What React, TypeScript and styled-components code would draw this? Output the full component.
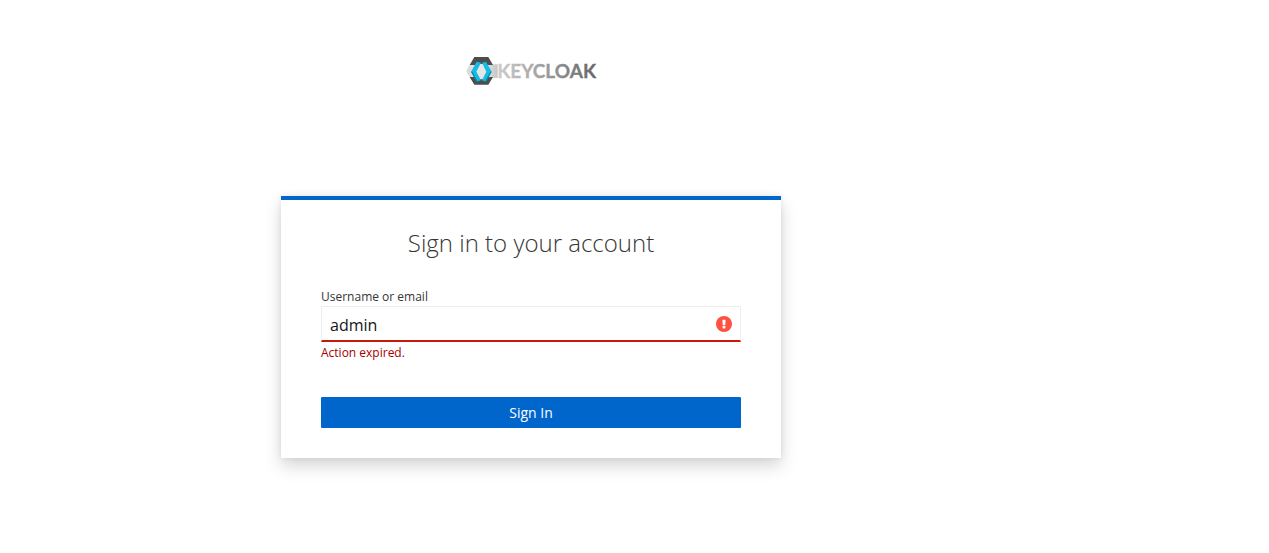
import React, { useState } from "react";
import styled, { createGlobalStyle } from "styled-components";

const GlobalStyle = createGlobalStyle`
  *, *::before, *::after { box-sizing: border-box; }
  body {
    margin: 0;
    background: #fff;
    color: #363636;
    font-family: "Open Sans", "Noto Sans", sans-serif;
    font-size: 12px;
    line-height: 18px;
  }
`;

const Page = styled.div`
  display: flex;
  flex-direction: column;
  align-items: center;
  padding: 56px 207px 80px 0;
`;

const Header = styled.header`
  margin-bottom: 110px;
`;

const LogoSvg = styled.svg`
  display: block;
  width: 132px;
  height: 30px;
`;

const Card = styled.main`
  width: 100%;
  max-width: 500px;
  padding: 27px 40px 30px;
  background: #fff;
  border-top: 4px solid #0066cc;
  box-shadow: 0 8px 16px 0 rgba(3, 3, 3, 0.16), 0 0 6px 0 rgba(3, 3, 3, 0.08);
`;

const Title = styled.h1`
  margin: 0 0 30px;
  font-size: 24px;
  font-weight: 300;
  line-height: 31px;
  text-align: center;
`;

const Label = styled.label`
  display: block;
`;

const Field = styled.div`
  position: relative;
`;

const TextInput = styled.input`
  display: block;
  width: 100%;
  height: 36px;
  padding: 2px 32px 0 8px;
  border: 1px solid #ededed;
  border-bottom: 2px solid #c9190b;
  border-radius: 0;
  background: #fff;
  color: #151515;
  font-family: inherit;
  font-size: 16px;
  outline: none;
`;

const ErrorIcon = styled.svg`
  position: absolute;
  top: 10px;
  right: 9px;
  width: 16px;
  height: 16px;
  pointer-events: none;
`;

const ErrorText = styled.p`
  margin: 2px 0 35px;
  color: #a30000;
`;

const SubmitButton = styled.button`
  display: block;
  width: 100%;
  height: 31px;
  padding: 0;
  border: 0;
  border-radius: 1px;
  background: #0066cc;
  color: #fff;
  font-family: inherit;
  font-size: 14px;
  line-height: 31px;
  cursor: pointer;
`;

function Logo() {
  return (
    <LogoSvg viewBox="15 18 396 90" role="img" aria-label="Keycloak">
      <defs>
        <linearGradient id="band" x1="0" x2="1" y1="0" y2="0">
          <stop offset="0" stopColor="#d8d8d8" />
          <stop offset="0.5" stopColor="#ececec" />
          <stop offset="1" stopColor="#c6c6c6" />
        </linearGradient>
        <linearGradient id="word" x1="0" x2="1" y1="0" y2="0">
          <stop offset="0" stopColor="#cdcdcd" />
          <stop offset="1" stopColor="#666" />
        </linearGradient>
      </defs>
      <path d="M30 43H113V84H30L19 63Z" fill="url(#band)" />
      <path d="M43 21H85L99 45H29ZM29 81H99L85 104H43Z" fill="#4d4d4d" />
      <path d="M52 36H76L92 66L76 94H52L36 66Z" fill="#4d4d4d" />
      <path d="M58 42H71L83 65L71 88H58L46 65Z" fill="#e5e5e5" />
      <path d="M50 35L63 38L49 65L63 91L50 95L33 65Z" fill="#12bce6" />
      <path d="M33 65H37L53 94L50 95Z" fill="#008aaa" />
      <path d="M78 35L66 38L79 65L66 91L78 95L95 65Z" fill="#12bce6" />
      <path d="M95 65L78 95L75 94L91 65Z" fill="#008aaa" />
      <text
        x="112"
        y="83"
        fill="url(#word)"
        stroke="url(#word)"
        strokeWidth="1"
        fontFamily="Lato, sans-serif"
        fontSize="57"
        fontWeight="700"
      >
        KEYCLOAK
      </text>
    </LogoSvg>
  );
}

export default function App() {
  const [username, setUsername] = useState("admin");
  return (
    <>
      <GlobalStyle />
      <Page>
        <Header>
          <Logo />
        </Header>
        <Card>
          <Title>Sign in to your account</Title>
          <form onSubmit={(e) => e.preventDefault()}>
            <Label htmlFor="username">Username or email</Label>
            <Field>
              <TextInput
                id="username"
                name="username"
                type="text"
                autoComplete="off"
                aria-invalid="true"
                aria-describedby="username-error"
                value={username}
                onChange={(e) => setUsername(e.target.value)}
              />
              <ErrorIcon viewBox="0 0 16 16" aria-hidden="true">
                <circle cx="8" cy="8" r="8" fill="#fe5142" />
                <path
                  d="M6.8 3.8H9.2Q9.6 3.8 9.6 4.2L9.3 8.8Q9.3 9.2 8.9 9.2H7.1Q6.7 9.2 6.7 8.8L6.4 4.2Q6.4 3.8 6.8 3.8Z"
                  fill="#fff"
                />
                <rect x="6.6" y="10" width="2.8" height="2.4" rx="0.6" fill="#fff" />
              </ErrorIcon>
            </Field>
            <ErrorText id="username-error">Action expired.</ErrorText>
            <SubmitButton type="submit">Sign In</SubmitButton>
          </form>
        </Card>
      </Page>
    </>
  );
}
